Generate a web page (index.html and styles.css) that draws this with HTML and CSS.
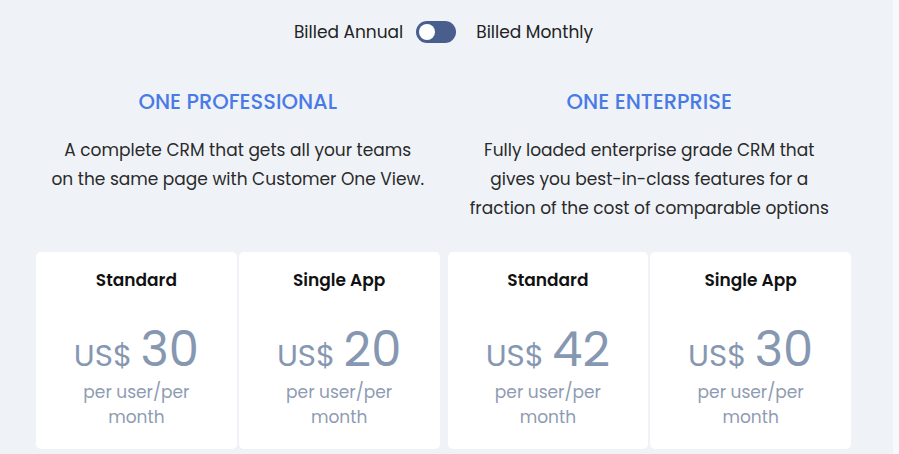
FILE: index.html
```html
<!DOCTYPE html>
<html lang="en">
<head>
<meta charset="utf-8">
<title>Pricing</title>
<link rel="stylesheet" href="styles.css">
</head>
<body>
<div class="page">
  <main class="main">
    <div class="billing">
      <span class="bill-label">Billed Annual</span>
      <span class="toggle"><span class="knob"></span></span>
      <span class="bill-label">Billed Monthly</span>
    </div>
    <div class="plans">
      <section class="plan">
        <h2 class="plan-title">ONE PROFESSIONAL</h2>
        <p class="plan-desc">A complete CRM that gets all your teams<br>on the same page with Customer One View.</p>
        <div class="cards">
          <div class="card">
            <h3 class="card-title">Standard</h3>
            <div class="price"><span class="cur">US$</span> <span class="amt">30</span></div>
            <div class="per">per user/per<br>month</div>
          </div>
          <div class="card">
            <h3 class="card-title">Single App</h3>
            <div class="price"><span class="cur">US$</span> <span class="amt">20</span></div>
            <div class="per">per user/per<br>month</div>
          </div>
        </div>
      </section>
      <section class="plan">
        <h2 class="plan-title">ONE ENTERPRISE</h2>
        <p class="plan-desc">Fully loaded enterprise grade CRM that<br>gives you best-in-class features for a<br>fraction of the cost of comparable options</p>
        <div class="cards">
          <div class="card">
            <h3 class="card-title">Standard</h3>
            <div class="price"><span class="cur">US$</span> <span class="amt">42</span></div>
            <div class="per">per user/per<br>month</div>
          </div>
          <div class="card">
            <h3 class="card-title">Single App</h3>
            <div class="price"><span class="cur">US$</span> <span class="amt">30</span></div>
            <div class="per">per user/per<br>month</div>
          </div>
        </div>
      </section>
    </div>
  </main>
  <div class="rail"></div>
</div>
</body>
</html>
```

FILE: styles.css
```css
* { box-sizing: border-box; }
html, body { margin: 0; padding: 0; height: 100%; overflow: hidden; }
body {
  font-family: "Poppins", "Open Sans", "Noto Sans", sans-serif;
  background: #eff3f8;
  color: #222;
}
.page {
  display: flex;
  height: 454px;
}
.main {
  flex: 0 0 893px;
  padding: 17px 42px 0 36px;
  background: #eff3f8;
}
.rail {
  flex: 1;
  background: #f8f9fd;
}
.billing {
  display: flex;
  justify-content: center;
  align-items: center;
  height: 30px;
}
.bill-label {
  font-size: 17px;
  color: #222;
}
.toggle {
  width: 40px;
  height: 22px;
  border-radius: 11px;
  background: #4a5e8e;
  display: flex;
  align-items: center;
  padding-left: 3px;
  margin: 0 20px 0 13px;
}
.knob {
  width: 16px;
  height: 16px;
  border-radius: 50%;
  background: #fff;
}
.plans {
  display: grid;
  grid-template-columns: 1fr 1fr;
  gap: 8px;
  margin-top: 40px;
}
.plan {
  display: flex;
  flex-direction: column;
}
.plan-title {
  margin: 0;
  text-align: center;
  font-size: 21px;
  font-weight: 500;
  color: #4a7ae6;
  line-height: 30px;
}
.plan-desc {
  margin: 19px 0 0;
  text-align: center;
  font-size: 17px;
  line-height: 29px;
  color: #2a2a2a;
  height: 116px;
}
.cards {
  display: grid;
  grid-template-columns: 1fr 1fr;
  gap: 2px;
}
.card {
  background: #fff;
  border-radius: 5px;
  height: 197px;
  display: flex;
  flex-direction: column;
  align-items: center;
  padding-top: 15px;
}
.card-title {
  margin: 0;
  font-size: 17px;
  font-weight: 600;
  color: #111;
  line-height: 26px;
}
.price {
  margin-top: 32px;
  color: #8697b2;
  line-height: 50px;
  white-space: nowrap;
}
.cur { font-size: 31px; margin-right: 4px; }
.amt { font-size: 48px; font-weight: 400; }
.per {
  text-align: center;
  font-size: 17px;
  line-height: 25px;
  color: #8e9bb2;
  margin-top: -6px;
}
```
